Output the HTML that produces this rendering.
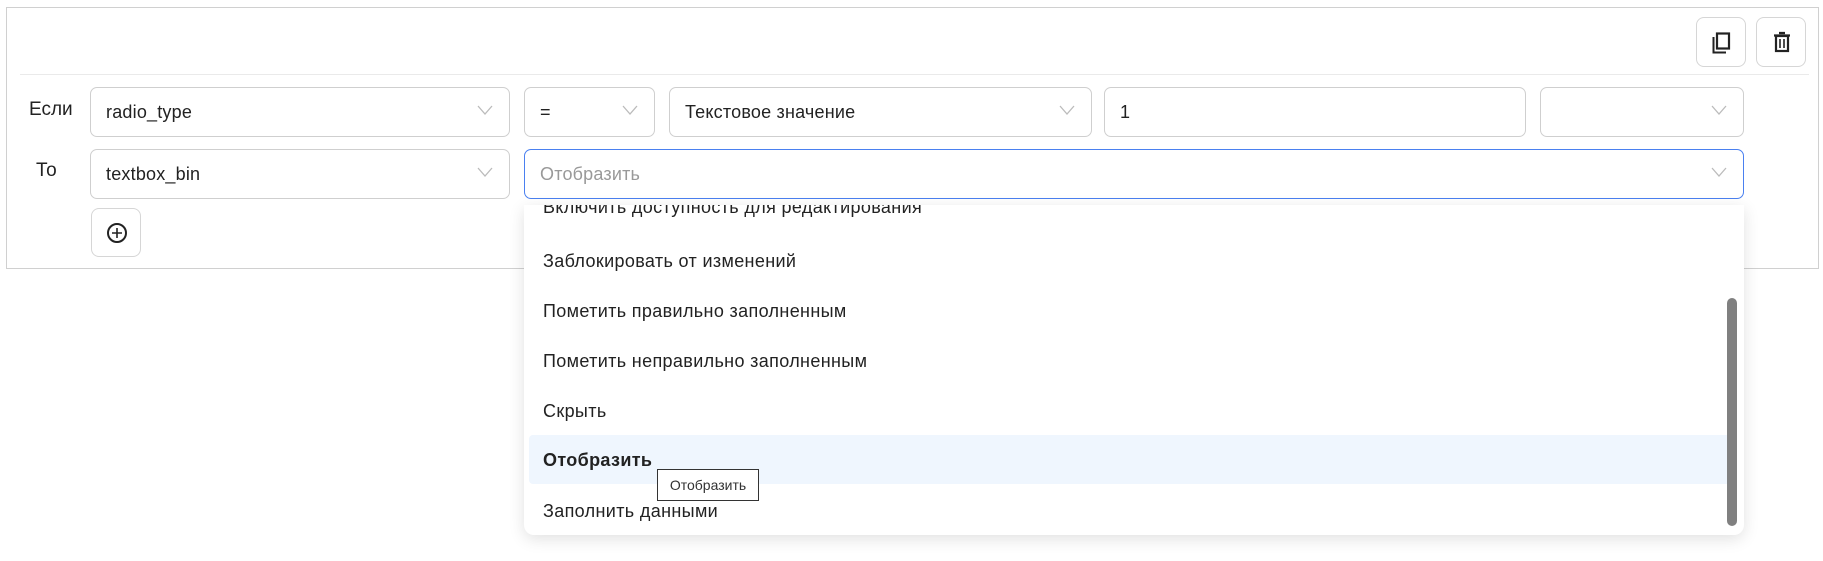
<!DOCTYPE html>
<html><head><meta charset="utf-8"><style>
*{box-sizing:border-box;margin:0;padding:0}
body{width:1823px;height:561px;background:#fff;font-family:"Liberation Sans",sans-serif;color:#222;position:relative;overflow:hidden}
.abs{position:absolute}
.outer{left:6px;top:7px;width:1813px;height:262px;border:1px solid #d0d0d0}
.div{left:20px;top:74px;width:1789px;height:1px;background:#eaeaea}
.btn{border:1px solid #d6d6d6;border-radius:8px;background:#fff}
.box{border:1px solid #cfcfcf;border-radius:7px;background:#fff;height:50px;font-size:18px;letter-spacing:0.2px;line-height:48px;padding-left:15px}
.chev{position:absolute;right:16px;top:17px;width:16px;height:10px}
.lbl{font-size:19px}
.dd{left:524px;top:205px;width:1220px;height:330px;background:#fff;border-radius:0 0 10px 10px;box-shadow:0 4px 16px rgba(0,0,0,.12);overflow:hidden}
.it{position:absolute;left:19px;font-size:18px;letter-spacing:0.35px;line-height:20px}
</style></head><body>
<div class="abs outer"></div>
<div class="abs div"></div>
<div class="abs btn" style="left:1696px;top:17px;width:50px;height:50px">
<svg class="abs" style="left:15px;top:14px" width="20" height="22" viewBox="0 0 20 22"><rect x="5" y="1.5" width="12" height="15" fill="none" stroke="#222" stroke-width="2.2"/><path d="M1.5 5V20.5H14" fill="none" stroke="#222" stroke-width="2"/></svg></div>
<div class="abs btn" style="left:1756px;top:17px;width:50px;height:50px">
<svg class="abs" style="left:16px;top:13px" width="18" height="22" viewBox="0 0 18 22"><path d="M6 2h6M1 4.5h16" stroke="#222" stroke-width="2.2" fill="none"/><rect x="3" y="5" width="12" height="15" fill="none" stroke="#222" stroke-width="2.2"/><path d="M7 8v9M11 8v9" stroke="#222" stroke-width="1.6"/></svg></div>

<div class="abs lbl" style="left:29px;top:99px">Если</div>
<div class="abs lbl" style="left:36px;top:160px">То</div>

<div class="abs box" style="left:90px;top:87px;width:420px">radio_type<svg class="chev" viewBox="0 0 16 10"><path d="M1 1l7 8 7-8" fill="none" stroke="#bbb" stroke-width="1.3"/></svg></div>
<div class="abs box" style="left:524px;top:87px;width:131px">=<svg class="chev" viewBox="0 0 16 10"><path d="M1 1l7 8 7-8" fill="none" stroke="#bbb" stroke-width="1.3"/></svg></div>
<div class="abs box" style="left:669px;top:87px;width:423px">Текстовое значение<svg class="chev" viewBox="0 0 16 10"><path d="M1 1l7 8 7-8" fill="none" stroke="#bbb" stroke-width="1.3"/></svg></div>
<div class="abs box" style="left:1104px;top:87px;width:422px">1</div>
<div class="abs box" style="left:1540px;top:87px;width:204px"><svg class="chev" viewBox="0 0 16 10"><path d="M1 1l7 8 7-8" fill="none" stroke="#bbb" stroke-width="1.3"/></svg></div>

<div class="abs box" style="left:90px;top:149px;width:420px">textbox_bin<svg class="chev" viewBox="0 0 16 10"><path d="M1 1l7 8 7-8" fill="none" stroke="#bbb" stroke-width="1.3"/></svg></div>
<div class="abs box" style="left:524px;top:149px;width:1220px;border-color:#4a80f0;color:#999">Отобразить<svg class="chev" viewBox="0 0 16 10"><path d="M1 1l7 8 7-8" fill="none" stroke="#bbb" stroke-width="1.3"/></svg></div>

<div class="abs btn" style="left:91px;top:208px;width:50px;height:49px">
<svg class="abs" style="left:14px;top:13px" width="22" height="22" viewBox="0 0 22 22"><circle cx="11" cy="11" r="9" fill="none" stroke="#222" stroke-width="2"/><path d="M11 6v10M6 11h10" stroke="#222" stroke-width="1.6"/></svg></div>

<div class="abs dd">
<div class="it" style="top:-8px">Включить доступность для редактирования</div>
<div class="it" style="top:46px">Заблокировать от изменений</div>
<div class="it" style="top:96px">Пометить правильно заполненным</div>
<div class="it" style="top:146px">Пометить неправильно заполненным</div>
<div class="it" style="top:196px">Скрыть</div>
<div class="abs" style="left:5px;top:230px;width:1205px;height:49px;background:#eff6fe;border-radius:4px"></div>
<div class="it" style="top:245px;font-weight:bold">Отобразить</div>
<div class="it" style="top:296px">Заполнить данными</div>
<div class="abs" style="left:1203px;top:93px;width:10px;height:228px;background:#808080;border-radius:5px"></div>
</div>
<div class="abs" style="left:657px;top:469px;width:102px;height:32px;border:1px solid #333;background:#fff;font-size:14px;line-height:30px;text-align:center;color:#333">Отобразить</div>
</body></html>
